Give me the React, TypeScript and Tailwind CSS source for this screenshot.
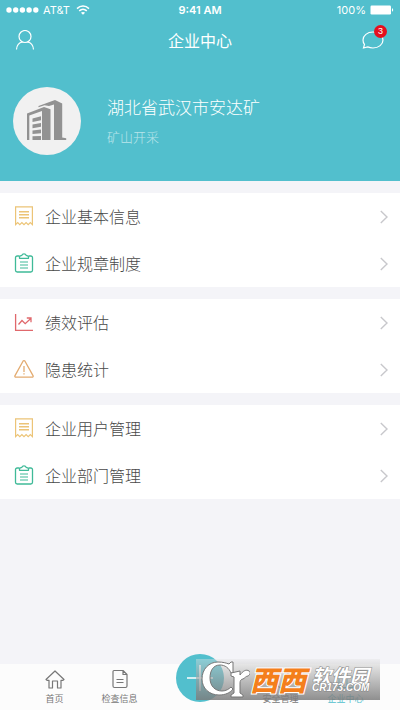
import type { ReactNode } from 'react';

interface MenuItem {
  label: string;
  icon: ReactNode;
}

function ReceiptIcon() {
  return (
    <svg viewBox="0 0 20 20" className="size-5" fill="none" stroke="#ecc477" strokeWidth="1.2">
      <path d="M1.6 18.6V.9h16.8v17.7l-2.1-2-2.1 2-2.1-2-2.1 2-2.1-2-2.1 2-2.1-2z" />
      <path d="M5 5.8h10M5 8.8h10M5 11.8h10" strokeWidth="1.4" />
    </svg>
  );
}

function ClipboardIcon() {
  return (
    <svg viewBox="0 0 20 20" className="size-5" fill="none" stroke="#3fba98" strokeWidth="1.3" strokeLinejoin="round">
      <path d="M5.5 3H3.2C2.2 3 1.5 3.7 1.5 4.7v12.6c0 1 .7 1.7 1.7 1.7h13.6c1 0 1.7-.7 1.7-1.7V4.7c0-1-.7-1.7-1.7-1.7h-2.3" />
      <path d="M5.5 5.300V3.800C6 2.800 7 2.800 7.700 2.500 8.300 1 9 .8 10 .8s1.700.2 2.300 1.700c.7.3 1.700.3 2.200 1.300v1.500z" />
      <path d="M6 9h8M6 12h8M6 15h8" strokeWidth="1.1" />
    </svg>
  );
}

function TrendIcon() {
  return (
    <svg viewBox="0 0 20 20" className="size-5" fill="none" stroke="#e0686c" strokeWidth="1.3">
      <path d="M1.6 2v16.400H19" />
      <path d="M4.500 12.500 8 8.500l3.200 3.200L16.800 6.500M12.800 6H17v4.200" />
    </svg>
  );
}

function WarningIcon() {
  return (
    <svg viewBox="0 0 20 20" className="size-5" fill="none" stroke="#e3ab70" strokeWidth="1.3" strokeLinejoin="round">
      <path d="M9 2.200c.5-.8 1.500-.8 2 0l8 14.400c.4.8 0 1.600-.9 1.600H1.900c-.9 0-1.300-.8-.9-1.600z" />
      <path d="M10 7v6M10 14.200v1.400" />
    </svg>
  );
}

const groups: MenuItem[][] = [
  [
    { label: '企业基本信息', icon: <ReceiptIcon /> },
    { label: '企业规章制度', icon: <ClipboardIcon /> },
  ],
  [
    { label: '绩效评估', icon: <TrendIcon /> },
    { label: '隐患统计', icon: <WarningIcon /> },
  ],
  [
    { label: '企业用户管理', icon: <ReceiptIcon /> },
    { label: '企业部门管理', icon: <ClipboardIcon /> },
  ],
];

function StatusBar() {
  return (
    <div className="grid h-5 grid-cols-3 items-center px-1.5 font-['Inter','Liberation_Sans',sans-serif] text-[11px] leading-5">
      <div className="flex items-center gap-1">
        <svg viewBox="0 0 33 6" className="h-1.5 w-[33px]" fill="currentColor">
          <circle cx="3" cy="3" r="2.7" />
          <circle cx="9.7" cy="3" r="2.7" />
          <circle cx="16.4" cy="3" r="2.7" />
          <circle cx="23.1" cy="3" r="2.7" />
          <circle cx="29.8" cy="3" r="2.7" />
        </svg>
        <span>AT&amp;T</span>
        <svg viewBox="0 0 14 10" className="ml-0.5 h-2.5 w-3.5" fill="none" stroke="currentColor" strokeWidth="1.5">
          <path d="M1 3.600c3.500-3.400 8.500-3.400 12 0M3.200 5.900c2.300-2.100 5.300-2.100 7.600 0" />
          <path d="M7 9.800 4.900 7.700c1.300-1 2.900-1 4.200 0z" fill="currentColor" stroke="none" />
        </svg>
      </div>
      <span className="text-center font-semibold">9:41 AM</span>
      <div className="flex items-center justify-end gap-1">
        <span>100%</span>
        <svg viewBox="0 0 24 10" className="h-2.5 w-6" fill="currentColor">
          <rect x="0.5" y="0.5" width="20.5" height="9" rx="1.2" />
          <path d="M22 3.300c1.600.3 1.600 3.100 0 3.400z" />
        </svg>
      </div>
    </div>
  );
}

function CompanyLogo() {
  return (
    <svg viewBox="0 0 68 68" className="size-[68px] shrink-0">
      <circle cx="34" cy="34" r="34" fill="#f1f1f1" />
      <g fill="#929292">
        <path d="M14 53V26.500L31 20l6.500 2.300V53H29V24l-12.700 4.500V53z" />
        <path d="M25.500 19 42 13l7.200 3.500V50.500l4 .7V53H41V17.500L36 19l-4.500-.8-6 2z" />
        <path d="M19.500 31.500l8.500-2.200v3.900l-8.500 1.900zM19.500 37.600l8.500-1.700v3.900l-8.500 1.400zM19.500 43.500l8.500-1v3.800l-8.500.8zM19.500 49.300l8.500-.4V53h-8.500z" />
      </g>
    </svg>
  );
}

function Chevron() {
  return (
    <svg viewBox="0 0 8 14" className="mt-0.5 h-3.5 w-2" fill="none" stroke="#c8c8cc" strokeWidth="1.4">
      <path d="M.8 1 7 7 .8 13" />
    </svg>
  );
}

function TabLink({ label, active, children }: { label: string; active?: boolean; children: ReactNode }) {
  return (
    <a
      href="#"
      className={`flex flex-1 flex-col items-center gap-1 pt-[5px] text-[9px] leading-3 whitespace-nowrap ${active ? 'text-[#52bfcd]' : 'text-[#777]'}`}
    >
      <svg viewBox="0 0 20 20" className="size-5" fill="none" stroke="currentColor" strokeWidth="1.2" strokeLinejoin="round">
        {children}
      </svg>
      {label}
    </a>
  );
}

function Watermark() {
  return (
    <div className="pointer-events-none absolute right-5 bottom-2.5 flex h-[41px] w-[184px] items-start bg-linear-to-b from-[#e4e4e4]/40 to-[#7c7c7c]/85 text-white">
      <svg viewBox="0 0 54 41" className="h-[41px] w-[54px] shrink-0" fill="#fff" stroke="#777" strokeWidth="1" strokeLinejoin="round">
        <path d="M37 3v11h-2c-2-5-6-8-11-8-7 0-10 6-10 13 0 8 5 13 12 13 4 0 7-2 9-4l2 2c-3 4-8 6-14 6C13 36 6 29 6 20 6 10 13 3 22 3c5 0 8 1 11 2l2-2z" />
        <path d="M35 14l9-2v4c3-4 6-6 9-4 2 1 1 4-1 5-2 0-3 2-5 3-2 0-3 2-3 4v10l3 2v2H35v-2l3-2V18l-3-1z" />
      </svg>
      <span className="pt-1.5 text-[28px] leading-7 font-black text-[#f47f1c] italic [-webkit-text-stroke:2px_#fff] [paint-order:stroke_fill]">
        西西
      </span>
      <div className="ml-1.5 flex flex-col pt-2 italic">
        <span className="text-[19px] leading-4 font-bold [-webkit-text-stroke:1px_#888] [paint-order:stroke_fill]">软件园</span>
        <span className="font-['Liberation_Sans',sans-serif] text-[10px] leading-[10px] font-bold [-webkit-text-stroke:1px_#888] [paint-order:stroke_fill]">
          CR173.COM
        </span>
      </div>
    </div>
  );
}

export default function App() {
  return (
    <div className="flex min-h-screen flex-col bg-[#f4f4f8] font-['Noto_Sans_CJK_SC',sans-serif] text-[#484848]">
      <header className="bg-[#52bfcd] pb-[26px] text-white">
        <StatusBar />
        <div className="flex h-10 items-center justify-between px-[15px]">
          <button type="button" aria-label="个人" className="w-6">
            <svg viewBox="0 0 20 20" className="size-5" fill="none" stroke="currentColor" strokeWidth="1.2">
              <circle cx="10" cy="6.5" r="6" />
              <path d="M1.500 19.500c.3-4.200 2.900-7 6-7.500M18.500 19.500c-.3-4.200-2.900-7-6-7.500" />
            </svg>
          </button>
          <h1 className="text-base leading-6">企业中心</h1>
          <button type="button" aria-label="消息" className="relative w-6">
            <svg viewBox="0 0 24 22" className="h-[22px] w-6" fill="none" stroke="currentColor" strokeWidth="1.2">
              <path d="M12 3c5.700 0 10 3.600 10 8s-4.300 8-10 8c-2 0-3.800-.4-5.300-1.100L2.500 19l1-3.600C2.500 14.200 2 12.600 2 11c0-4.400 4.300-8 10-8z" />
            </svg>
            <span className="absolute -top-1 -right-0.5 size-[13px] rounded-full bg-[#e60f1e] text-center font-['Liberation_Sans',sans-serif] text-[9px] leading-[13px]">
              3
            </span>
          </button>
        </div>
        <div className="flex items-center gap-[26px] px-[13px] pt-[27px]">
          <CompanyLogo />
          <div className="flex flex-col gap-2">
            <h2 className="text-[17px] leading-6 font-light">湖北省武汉市安达矿</h2>
            <p className="text-[13px] leading-5 font-light text-white/60">矿山开采</p>
          </div>
        </div>
      </header>

      <main className="flex flex-1 flex-col gap-3 py-3">
        {groups.map((items, i) => (
          <ul key={i} className="bg-white">
            {items.map((item) => (
              <li key={item.label}>
                <a href="#" className="flex h-[47px] items-center pr-3 pb-0.5 pl-3.5">
                  {item.icon}
                  <span className="ml-[11px] flex-1 text-base leading-6 font-light">{item.label}</span>
                  <Chevron />
                </a>
              </li>
            ))}
          </ul>
        ))}
      </main>

      <nav className="relative flex h-[46px] bg-[#fcfcfc] px-[22px]">
        <TabLink label="首页">
          <path d="M1 10.500 10 2l9 8.500-1 .8h-2V19h-3.500v-7h-5v7H4v-7.700H2z" />
        </TabLink>
        <TabLink label="检查信息">
          <path d="M4 1.500h9l4 4v11.500c0 1-.5 1.500-1.500 1.500h-11C3.500 18.500 3 18 3 17V2.500c0-.6.400-1 1-1zM13 1.500v4h4M6.500 10.500h7M6.500 13.500h7" />
        </TabLink>
        <div className="flex w-24 justify-center">
          <button type="button" aria-label="新增" className="-mt-2.5 flex size-12 items-center justify-center rounded-full bg-[#52bfcd]">
            <svg viewBox="0 0 28 28" className="size-7" stroke="#fff" strokeWidth="1.5">
              <path d="M1 14h26M14 1v26" />
            </svg>
          </button>
        </div>
        <TabLink label="安全管理">
          <path d="M10 1.500 17 4v6c0 4-3 7-7 9-4-2-7-5-7-9V4z" />
        </TabLink>
        <TabLink label="企业中心" active>
          <path d="M3 18.500v-15h8v15M11 8h6v10.500M1 18.500h18" />
        </TabLink>
        <Watermark />
      </nav>
    </div>
  );
}
